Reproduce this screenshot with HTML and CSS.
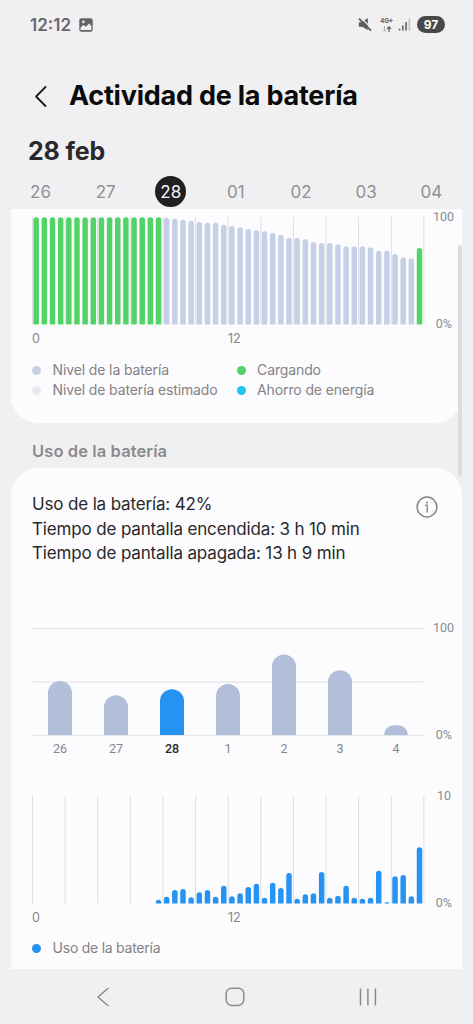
FILE: index.html
```html
<!DOCTYPE html>
<html lang="es">
<head>
<meta charset="utf-8">
<meta name="viewport" content="width=device-width">
<title>Actividad de la batería</title>
<link rel="stylesheet" href="styles.css">
</head>
<body>
<div class="screen">
  <div class="status">
    <span class="clock">12:12</span>
    <svg class="ic-photo" width="14" height="14" viewBox="0 0 14 14"><rect x=".3" y=".3" width="13.4" height="13.4" rx="2" fill="#646467"/><path d="M1.6 9.6 4.4 7l2.6 1.8L10 5.4l2.4 2.7v4H1.6z" fill="#f0f0f2"/><circle cx="4.4" cy="3.9" r="1.3" fill="#f0f0f2"/></svg>
    <span class="spacer"></span>
    <svg class="ic-mute" width="14" height="15" viewBox="0 0 14 15"><path d="M.8 5.2h3L9.8 1v12L4 9.8H.8z" fill="#5c5c5f"/><path d="M2.6.7 14 11.6" stroke="#f0f0f2" stroke-width="1.3"/><path d="M1 1.6 13 13.6" stroke="#5c5c5f" stroke-width="1.7"/></svg>
    <span class="net"><span class="net-type">4G+</span><svg width="12" height="6" viewBox="0 0 12 6"><path d="M3.5 0v5M1.8 3.6l1.7 1.7 1.7-1.7" fill="none" stroke="#adadb0"/><path d="M8 6V1M6 2.8 8 .8l2 2" fill="none" stroke="#58585b" stroke-width="1.2"/></svg></span>
    <svg class="ic-signal" width="13" height="13" viewBox="0 0 13 13"><path d="M1.5 10.8V12.6M4.8 7.4v5.2" stroke="#68686b" stroke-width="1.7"/><path d="M8.1 4v8.6" stroke="#68686b" stroke-width="1.7"/><path d="M11.4.4v12.2" stroke="#c4c4c7" stroke-width="1.7"/></svg>
    <span class="battery">97</span>
  </div>
  <header class="title-bar">
    <svg width="13" height="21" viewBox="0 0 13 21"><path d="M11.5 1 2.1 10.5l9.4 9.5" fill="none" stroke="#19191b" stroke-width="1.8" stroke-linecap="round" stroke-linejoin="round"/></svg>
    <h1>Actividad de la batería</h1>
  </header>
  <h2 class="date">28 feb</h2>
  <nav class="days"><span>26</span><span>27</span><span class="current">28</span><span>01</span><span>02</span><span>03</span><span>04</span></nav>

  <main class="content">
    <section class="card level">
      <div class="chart">
        <svg class="plot" width="394" height="108" viewBox="0 0 394 108">
          <defs><clipPath id="base"><rect width="394" height="107.4"/></clipPath></defs>
          <path class="grid" d="M.5 0V107M33.1 0V107M65.7 0V107M98.3 0V107M131 0V107M163.6 0V107M196.2 0V107M228.8 0V107M261.4 0V107M294 0V107M326.6 0V107M359.3 0V107M391.9 0V107"/>
          <g clip-path="url(#base)">
            <path class="bar green" d="M4.2 115V3.1M12.36 115V3.1M20.51 115V3.1M28.67 115V3.1M36.82 115V3.1M44.98 115V3.1M53.13 115V3.1M61.29 115V3.1M69.44 115V3.1M77.6 115V3.1M85.75 115V3.1M93.91 115V3.1M102.06 115V3.1M110.22 115V3.1M118.37 115V3.1M126.53 115V3.1M387.5 115V33.8"/>
            <path class="bar pale" d="M134.68 115V3.5M142.84 115V4.5M150.99 115V5.5M159.15 115V6.5M167.3 115V7.5M175.46 115V8.5M183.61 115V8.5M191.77 115V10.5M199.92 115V11.8M208.08 115V13.1M216.23 115V14.8M224.39 115V16.1M232.54 115V17.1M240.7 115V18.5M248.85 115V20.5M257.01 115V23.8M265.16 115V23.8M273.32 115V24.8M281.47 115V27.8M289.63 115V28.8M297.78 115V28.8M305.94 115V30.1M314.09 115V32.1M322.25 115V32.1M330.4 115V32.1M338.56 115V33.1M346.71 115V36.5M354.87 115V36.5M363.02 115V39.8M371.18 115V43.1M379.33 115V44.1"/>
          </g>
        </svg>
        <div class="y-axis"><span>100</span><span class="zero">0%</span></div>
      </div>
      <div class="hours"><span>0</span><span>12</span></div>
      <ul class="legend">
        <li><i class="dot dot-level"></i>Nivel de la batería</li><li><i class="dot dot-charge"></i>Cargando</li>
        <li><i class="dot dot-est"></i>Nivel de batería estimado</li><li><i class="dot dot-save"></i>Ahorro de energía</li>
      </ul>
    </section>

    <h3 class="section-title">Uso de la batería</h3>

    <section class="card usage">
      <div class="summary">
        <div class="lines"><p>Uso de la batería: 42%</p><p>Tiempo de pantalla encendida: 3 h 10 min</p><p>Tiempo de pantalla apagada: 13 h 9 min</p></div>
        <svg class="info" width="22" height="22" viewBox="0 0 22 22"><circle cx="11" cy="11" r="9.9" fill="none" stroke="#86868a" stroke-width="1.5"/><path d="M9.2 9.2h2v7.3" fill="none" stroke="#86868a" stroke-width="1.4"/><circle cx="10.9" cy="6.4" r="1" fill="#86868a"/></svg>
      </div>
      <div class="chart weekly">
        <svg class="plot" width="394" height="108" viewBox="0 0 394 108">
          <path class="rule" d="M.5 .6H391.5M.5 54H391.5M.5 107.4H391.5"/>
          <path fill="#b1bfda" d="M16 107V65a12 12 0 0 1 24 0v42zM72 107V79.2a12 12 0 0 1 24 0V107zM184 107V67.9a12 12 0 0 1 24 0V107zM240 107V38.6a12 12 0 0 1 24 0V107zM296 107V54.2a12 12 0 0 1 24 0V107zM352 107a10 10 0 0 1 10-9.8h4a10 10 0 0 1 10 9.8z"/>
          <path fill="#2693f3" d="M128 107V73.2a12 12 0 0 1 24 0V107z"/>
        </svg>
        <div class="y-axis"><span>100</span><span class="zero">0%</span></div>
      </div>
      <div class="weekdays"><span>26</span><span>27</span><span class="current">28</span><span>1</span><span>2</span><span>3</span><span>4</span></div>
      <div class="chart hourly">
        <svg class="plot" width="394" height="108" viewBox="0 0 394 108">
          <path class="grid" d="M.5 0V107M33.1 0V107M65.7 0V107M98.3 0V107M131 0V107M163.6 0V107M196.2 0V107M228.8 0V107M261.4 0V107M294 0V107M326.6 0V107M359.3 0V107M391.9 0V107"/>
          <g clip-path="url(#base)">
            <path class="bar blue" d="M126.53 115V106.5M134.68 115V103.5M142.84 115V96.8M150.99 115V95.8M159.15 115V104.1M167.3 115V99.1M175.46 115V96.8M183.61 115V103.5M191.77 115V92.5M199.92 115V103.1M208.08 115V100.1M216.23 115V93.8M224.39 115V90.5M232.54 115V104.5M240.7 115V89.5M248.85 115V94.8M257.01 115V79.8M265.16 115V105.5M273.32 115V101.1M281.47 115V100.1M289.63 115V78.8M297.78 115V104.5M305.94 115V102.5M314.09 115V92.5M322.25 115V104.5M330.4 115V105.5M338.56 115V104.5M346.71 115V77.5M354.87 115V108.8M363.02 115V83.1M371.18 115V81.8M379.33 115V103.1M387.5 115V54.1"/>
          </g>
        </svg>
        <div class="y-axis"><span class="ten">10</span><span class="zero">0%</span></div>
      </div>
      <div class="hours"><span>0</span><span>12</span></div>
      <ul class="legend single"><li><i class="dot dot-use"></i>Uso de la batería</li></ul>
    </section>
    <div class="scrollbar"></div>
  </main>

  <footer class="nav">
    <svg width="14" height="20" viewBox="0 0 14 20"><path d="M12.4 1 2 10l10.4 9" fill="none" stroke="#8b8b8e" stroke-width="1.5"/></svg>
    <svg width="20" height="20" viewBox="0 0 20 20"><rect x="1.2" y="1.2" width="17.6" height="17.2" rx="5.5" fill="none" stroke="#8b8b8e" stroke-width="1.5"/></svg>
    <svg width="18" height="18" viewBox="0 0 18 18"><path d="M1.5.5v17M8.9.5v17M16.4.5v17" stroke="#8b8b8e" stroke-width="1.5"/></svg>
  </footer>
</div>
</body>
</html>
```
FILE: styles.css
```css
* { box-sizing: border-box; margin: 0; padding: 0; }
body { background: #f0f0f2; font-family: Inter, Roboto, sans-serif; color: #29292b; }
svg { display: block; flex: none; }
.screen { width: 473px; height: 1024px; display: flex; flex-direction: column; overflow: hidden; background: #f0f0f2; }

.status { height: 49px; padding: 0 28px 0 30px; display: flex; align-items: center; flex: none; }
.clock { font-size: 17px; font-weight: 600; color: #68686b; width: 49px; }
.spacer { flex: 1; }
.ic-mute { margin-right: 7px; }
.net { width: 15px; margin-right: 4px; display: flex; flex-direction: column; align-items: center; gap: 1px; }
.net-type { font: 700 7px/7px Roboto, sans-serif; color: #68686b; }
.ic-signal { margin-right: 6px; }
.battery { width: 28px; height: 17px; border-radius: 9px; background: #48484a; color: #fff; font-size: 12px; font-weight: 700; line-height: 17px; text-align: center; }

.title-bar { height: 94px; padding: 0 0 0 34px; display: flex; align-items: center; gap: 22px; flex: none; }
h1 { font-size: 27px; line-height: 32px; font-weight: 700; color: #0b0b0c; letter-spacing: -.23px; white-space: nowrap; }
.date { height: 32px; margin-top: -8px; padding-left: 28px; font-size: 25px; line-height: 32px; font-weight: 700; letter-spacing: -.15px; flex: none; }
.days { height: 42px; padding: 9px 9px 0 8px; display: grid; grid-template-columns: repeat(7, 65.14px); flex: none; font-size: 17px; line-height: 32px; color: #909093; text-align: center; justify-items: center; }
.days span { width: 31px; height: 31px; }
.days .current { border-radius: 50%; background: #202022; color: #f4f4f6; }

.content { position: relative; height: 760px; padding: 0 11px; overflow: hidden; flex: none; }
.card { background: #fcfcfe; padding: 0 0 0 21px; }
.level { height: 214px; padding-top: 8px; border-radius: 0 0 27px 27px; }
.chart { display: flex; height: 108px; }
.y-axis { width: 29px; margin: -8px 0 -7px 0; display: flex; flex-direction: column; justify-content: space-between; align-items: flex-end; font: 12.5px/16px Roboto, sans-serif; color: #8b8b8e; }
.y-axis span { margin-right: 1px; }
.y-axis .zero { margin-right: 3px; }
.y-axis .ten { margin-right: 4px; }
.grid { stroke: #dedee1; stroke-width: 1; fill: none; }
.rule { stroke: #e6e6e9; stroke-width: 1.4; fill: none; }
.bar { fill: none; stroke-width: 5.5; stroke-linecap: round; }
.green { stroke: #52d267; }
.pale { stroke: #c5d0e6; }
.blue { stroke: #2693f3; }
.hours { display: grid; grid-template-columns: 196px 1fr; height: 26px; padding-top: 5px; font: 12.5px/17px Inter, sans-serif; color: #858588; }
.legend { list-style: none; display: grid; grid-template-columns: 204.5px 1fr; grid-auto-rows: 20px; margin-top: 9px; font-size: 14px; line-height: 20px; letter-spacing: -.13px; color: #828285; white-space: nowrap; }
.legend li { display: flex; align-items: center; gap: 11.6px; }
.dot { width: 9px; height: 9px; border-radius: 50%; flex: none; }
.dot-level { background: #c5d0e6; }
.dot-charge { background: #52d267; }
.dot-est { background: #e8eaee; }
.dot-save { background: #1dc7ef; }
.dot-use { background: #2693f3; }

.section-title { height: 45px; padding: 17px 0 0 21px; font-size: 16.5px; line-height: 22px; font-weight: 600; letter-spacing: .1px; color: #8b8b8e; }
.usage { height: 501px; padding-top: 24px; border-radius: 27px 27px 0 0; }
.summary { display: flex; justify-content: space-between; padding-right: 24px; height: 136px; }
.lines { font-size: 17px; line-height: 24.5px; letter-spacing: -.15px; white-space: nowrap; }
.info { margin-top: 4px; }
.weekdays { display: grid; grid-template-columns: repeat(7, 56px); height: 60px; padding-top: 4px; font: 12.5px/17px Roboto, sans-serif; color: #858588; text-align: center; }
.weekdays .current { color: #29292b; font-weight: 500; }
.single { margin-top: 8px; letter-spacing: -.25px; }
.scrollbar { position: absolute; left: 458px; top: 36px; width: 4px; height: 231px; border-radius: 2px; background: #dcdcde; }

.nav { height: 55px; padding: 0 96px; display: flex; align-items: center; justify-content: space-between; }
```
